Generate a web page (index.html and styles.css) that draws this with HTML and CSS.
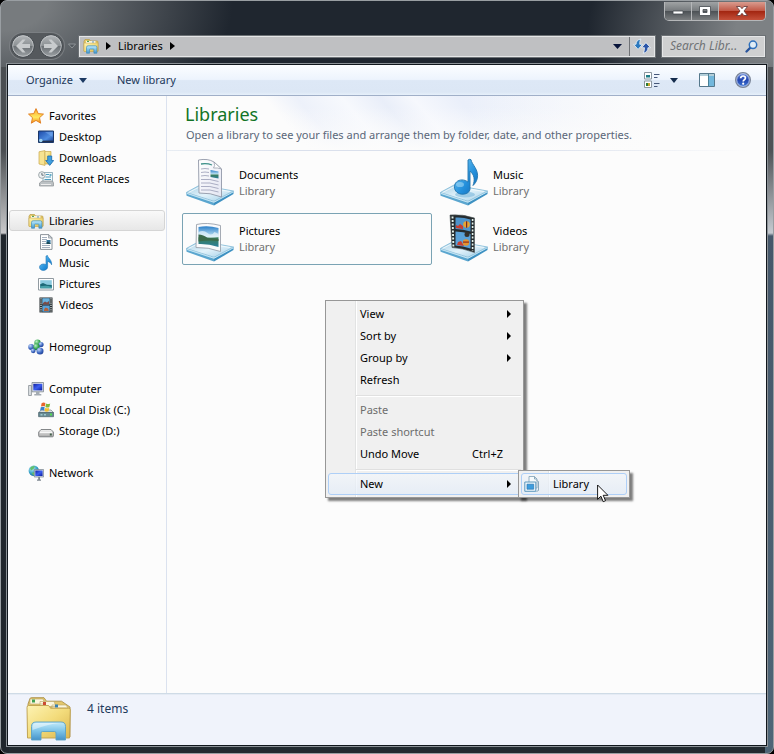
FILE: index.html
```html
<!DOCTYPE html>
<html lang="en">
<head>
<meta charset="utf-8">
<meta name="viewport" content="width=device-width, initial-scale=1">
<title>Libraries</title>
<link rel="stylesheet" href="styles.css">
</head>
<body>
<svg class="defs" width="0" height="0" aria-hidden="true">
  <defs>
    <linearGradient id="gFolder" x1="0" y1="0" x2="1" y2="1"><stop offset="0" stop-color="#fdf3b4"/><stop offset=".5" stop-color="#f3dc7c"/><stop offset="1" stop-color="#dcb64e"/></linearGradient>
    <linearGradient id="gBlue" x1="0" y1="0" x2="0" y2="1"><stop offset="0" stop-color="#c4ebfa"/><stop offset=".5" stop-color="#7cc3e8"/><stop offset="1" stop-color="#4592c9"/></linearGradient>
    <linearGradient id="gTray" x1="0" y1="0" x2="1" y2="1"><stop offset="0" stop-color="#a5cfe5"/><stop offset=".5" stop-color="#e2f2fa"/><stop offset="1" stop-color="#9dcce6"/></linearGradient>
    <linearGradient id="gNote" x1="0" y1="0" x2="1" y2="1"><stop offset="0" stop-color="#7fd0f5"/><stop offset=".6" stop-color="#2490dc"/><stop offset="1" stop-color="#1268b4"/></linearGradient>
    <linearGradient id="gSky" x1="0" y1="0" x2="0" y2="1"><stop offset="0" stop-color="#2b7fc9"/><stop offset=".5" stop-color="#c4e6f4"/><stop offset=".56" stop-color="#3b7d58"/><stop offset="1" stop-color="#2a7f9c"/></linearGradient>
    <linearGradient id="gScreen" x1="0" y1="0" x2="1" y2="1"><stop offset="0" stop-color="#1020a0"/><stop offset=".5" stop-color="#3c5ef0"/><stop offset="1" stop-color="#0a1c9c"/></linearGradient>
    <linearGradient id="gDesk" x1="0" y1="0" x2="1" y2="1"><stop offset="0" stop-color="#1c49a8"/><stop offset=".6" stop-color="#4d8ce0"/><stop offset="1" stop-color="#16378c"/></linearGradient>
    <linearGradient id="gStar" x1="0" y1="0" x2="0" y2="1"><stop offset="0" stop-color="#fba52e"/><stop offset=".6" stop-color="#ffe95e"/><stop offset="1" stop-color="#f3851a"/></linearGradient>
    <linearGradient id="gPaper" x1="0" y1="0" x2="1" y2="1"><stop offset="0" stop-color="#ffffff"/><stop offset="1" stop-color="#e4e6f2"/></linearGradient>
    <linearGradient id="gDrive" x1="0" y1="0" x2="0" y2="1"><stop offset="0" stop-color="#f4f4f4"/><stop offset="1" stop-color="#a8a8a8"/></linearGradient>
    <linearGradient id="gOrb" x1="0" y1="0" x2="0" y2="1"><stop offset="0" stop-color="#b4b8bb"/><stop offset=".48" stop-color="#8d9295"/><stop offset=".52" stop-color="#6c7175"/><stop offset="1" stop-color="#9ea3a6"/></linearGradient>
    <radialGradient id="gGreen" cx=".35" cy=".3" r=".8"><stop offset="0" stop-color="#b8efc0"/><stop offset=".6" stop-color="#31a44c"/><stop offset="1" stop-color="#15702e"/></radialGradient>
    <radialGradient id="gBall" cx=".35" cy=".3" r=".8"><stop offset="0" stop-color="#c0d8fa"/><stop offset=".6" stop-color="#3c66c0"/><stop offset="1" stop-color="#1c3a8c"/></radialGradient>
    <radialGradient id="gGlobe" cx=".35" cy=".3" r=".8"><stop offset="0" stop-color="#b8f0f4"/><stop offset=".6" stop-color="#2f9cc4"/><stop offset="1" stop-color="#175f94"/></radialGradient>
    <linearGradient id="gHelp" x1="0" y1="0" x2="0" y2="1"><stop offset="0" stop-color="#6b8fe0"/><stop offset=".5" stop-color="#2346b0"/><stop offset="1" stop-color="#3d78d8"/></linearGradient>

    <symbol id="i-lib" viewBox="0 0 16 16">
      <path d="M1 3.200 2 1.500h4.500l1 1.500H14a1 1 0 0 1 1 1V13H1z" fill="#e6cb6c" stroke="#b99b43" stroke-width=".7"/>
      <path d="M3 3.200h9.500V5H3z" fill="#fff"/><path d="M4 2.800h2v1.200H4z" fill="#57a35c"/><path d="M9 3.500h2v1H9z" fill="#4e94c8"/>
      <path d="M1 5h14v8.500H1z" fill="url(#gFolder)" stroke="#c9a94e" stroke-width=".6"/>
      <path d="M3.500 15.200V9.400q0-1.600 1.600-1.600h7.200q1.600 0 1.600 1.600v5.800h-3v-3.600q0-.5-.6-.5H7.200q-.7 0-.7.6v3.500z" fill="url(#gBlue)" stroke="#3f8fbe" stroke-width=".7"/>
    </symbol>
    <symbol id="i-star" viewBox="0 0 16 16"><path d="M8 .6l2.200 5 5.300.5-4 3.600 1.200 5.500L8 12.400l-4.700 2.800 1.200-5.500-4-3.600 5.300-.5z" fill="url(#gStar)" stroke="#e07a1c" stroke-width=".9" stroke-linejoin="round"/></symbol>
    <symbol id="i-desktop" viewBox="0 0 16 16"><path d="M.5 2h15v11.500H.5z" fill="url(#gDesk)" stroke="#1b3768"/><path d="M1 11.600h14V13H1z" fill="#20304e"/><circle cx="2.800" cy="11.500" r="1.800" fill="#9fd4f0"/><path d="M7 3h7.500v5z" fill="#7eaef0" opacity=".5"/></symbol>
    <symbol id="i-downloads" viewBox="0 0 16 16"><path d="M1 1.800 7 .6v14.800L1 14z" fill="#f7e391" stroke="#c9a84d" stroke-width=".7"/><path d="M7 1.500h6V14H7z" fill="url(#gFolder)" stroke="#c9a84d" stroke-width=".7"/><path d="M9.700 6h4v4.500h2L11.700 15.400 7.700 10.500h2z" fill="#3f9fe0" stroke="#1c6cb0" stroke-width=".8"/></symbol>
    <symbol id="i-recent" viewBox="0 0 16 16"><path d="M5 1.500h9.500V12H5z" fill="#f4fafc" stroke="#7da0ae" stroke-width=".8"/><path d="M8 3.500h3M7.500 6h5.500M6.500 8.500H13" stroke="#4f9cbe" stroke-width="1"/><path d="M11.500 3h2v2h-2z" fill="#66adc8"/><path d="M1.500 12 4 10h10.500l1 2v3H1.500z" fill="#bcc1c4" stroke="#8b9194" stroke-width=".7"/><path d="M3 13.500h10" stroke="#eee"/><circle cx="3.900" cy="4" r="3.300" fill="#eef2f4" stroke="#8b9599" stroke-width=".8"/><path d="M3.900 2v2.200h1.800" fill="none" stroke="#44525a" stroke-width=".8"/></symbol>
    <symbol id="i-doc" viewBox="0 0 16 16"><path d="M2.500.6h8.300l3.200 3.200v11.600H2.500z" fill="#fff" stroke="#808890" stroke-width=".9"/><path d="M10.500.8v3.300H14z" fill="#d2d7dc" stroke="#808890" stroke-width=".6"/><path d="M4 3.500h5M4 5.500h5M4 7.500h4M4 9.500h4M4 11.500h8M4 13.500h8" stroke="#8d9bac" stroke-width=".8"/><path d="M8.500 6h4v4h-4z" fill="#2e729c"/><path d="M8.500 8.800 10 7.600l2.500 2V10h-4z" fill="#194a57"/></symbol>
    <symbol id="i-note" viewBox="0 0 16 16"><path d="M8 1 9.500.5C9.700 3 14 4.500 13.600 9.800c-.9-2.200-2.300-3-4-3.400v5.500c0 2-2 3.500-4.300 3.500-2.200 0-3.800-1.300-3.800-3.200S3.300 9 5.500 9c.9 0 1.800.2 2.500.7z" fill="url(#gNote)" stroke="#1c75b5" stroke-width=".6"/></symbol>
    <symbol id="i-pic" viewBox="0 0 16 16"><path d="M.5 2.500h15v11.500H.5z" fill="#fff" stroke="#848e96" stroke-width=".9"/><path d="M2.200 4.200h11.600v8H2.200z" fill="#8ccbe0"/><path d="M2.200 8.200 5 7l4 1.800 4.800.3v3.100H2.200z" fill="#1c6977"/><path d="M2.200 10.300q6-1.600 11.600.6v1.300H2.200z" fill="#46a0a8"/></symbol>
    <symbol id="i-video" viewBox="0 0 16 16"><path d="M1.500.5h13v15h-13z" fill="#23292c"/><path d="M4.300 1.200h7.400v6.200H4.300z" fill="#69b1de"/><path d="M4.300 8.500h7.400v6.200H4.300z" fill="#5aa3d8"/><path d="M5 6 7 4.600l2 1L11 4v3.400H5z" fill="#7c4c48"/><path d="M6 12.500l1.500-2 2.500 1 .8 2.500H6z" fill="#b4623c"/><path d="M3 1.200v14M13 1.200v14" stroke="#e6f0ee" stroke-width="1.200" stroke-dasharray="1.200 1"/></symbol>
    <symbol id="i-home" viewBox="0 0 16 16"><circle cx="9.500" cy="3.800" r="3.200" fill="url(#gGreen)"/><circle cx="3.200" cy="8" r="3" fill="url(#gBall)"/><circle cx="13" cy="5.500" r="2.600" fill="url(#gBall)"/><circle cx="8.500" cy="8" r="3.200" fill="url(#gGreen)"/><circle cx="12" cy="12" r="3.500" fill="url(#gBall)"/><circle cx="5.200" cy="11.800" r="2.400" fill="url(#gBall)"/></symbol>
    <symbol id="i-computer" viewBox="0 0 16 16"><path d="M.6 4.500h2.800v10H.6z" fill="#dfe3e6" stroke="#868d93" stroke-width=".8"/><path d="M4 1.500h11.500v9.300H4z" fill="#e1e5ea" stroke="#7b8590" stroke-width=".8"/><path d="M5.300 2.800h9v6.600h-9z" fill="url(#gScreen)"/><path d="M8 11h3.500v2H8zM6.300 13h7v1.500h-7z" fill="#a4abb2"/></symbol>
    <symbol id="i-disk" viewBox="0 0 16 16"><path d="M1 10.500 3 8h10l2.500 2.500z" fill="#d7dfe2" stroke="#75838a" stroke-width=".7"/><path d="M.6 10.500h14.900v4.200H.6z" fill="#678a92" stroke="#49616a" stroke-width=".7"/><path d="M2.500 12h2v1.500h-2zM6 12h2v1.500H6z" fill="#9ec8cf"/><path d="M12 11.600h2v1.800h-2z" fill="#53dc4e"/><path d="M3.600 1.300Q5.500 0 7.400 1.100L6.800 4.400Q5 3.500 3 4.500z" fill="#e8642c"/><path d="M8 1.500q2 1 4.200 0l-.8 3.500q-2 1-4 0z" fill="#7fb93a"/><path d="M2.800 5.300q2-1 3.900 0l-.7 3.300q-2-1-3.900 0z" fill="#3a80c9"/><path d="M7.300 5.700q2 1 4 0l-.8 3.500q-2 .9-3.900-.1z" fill="#f5c02f"/></symbol>
    <symbol id="i-storage" viewBox="0 0 16 16"><path d="M.7 9 3 6.500h10L15.400 9v3.800q0 1-1 1H1.700q-1 0-1-1z" fill="url(#gDrive)" stroke="#76797c" stroke-width=".9"/><path d="M2 9.300h12" stroke="#fff"/><path d="M11.800 10.500h2v2h-2z" fill="#43604a"/></symbol>
    <symbol id="i-network" viewBox="0 0 16 16"><circle cx="5.800" cy="5.800" r="5.200" fill="url(#gGlobe)"/><path d="M2 3q2-2.500 5-2L5.500 4 3 5.500zM3.500 8l3-1 1 3-2 .5z" fill="#63c06b"/><path d="M6.300 4.500h9.300V12H6.300z" fill="#d6dde4" stroke="#76828c" stroke-width=".7"/><path d="M7.300 5.500h7.300V11H7.300z" fill="url(#gScreen)"/><path d="M10.200 12h1.800v2.500h1v1.200H9v-1.200h1.200z" fill="#7d8790"/></symbol>

    <g id="tray">
      <path d="M.3 36 28 45v3.500L.6 38.800z" fill="#5ba6cf"/><path d="M28 45 47.500 34v3.100L28 48.500z" fill="#3e91c2"/>
      <path d="M.3 35.500 14 28 47.500 34 28 44.300z" fill="url(#gTray)" stroke="#7db8d6" stroke-width=".8"/>
      <path d="M2.500 35.500 14.500 29.500 44 34.500" fill="none" stroke="#fff" opacity=".8" stroke-width=".8"/>
      <path d="M1 36.500 28 45.300 47 35" fill="none" stroke="#c5e6f5" stroke-width="1"/>
    </g>
    <symbol id="b-doc" viewBox="0 1 48 48"><use href="#tray"/>
      <path d="M12.500 3Q22 1.200 28 5l7.500 7V40Q24 35.500 13 36z" fill="url(#gPaper)" stroke="#9298a8" stroke-width=".9"/>
      <path d="M28 5q1.500 4-.5 6 4-.5 8 1z" fill="#fff" stroke="#8d94a2" stroke-width=".7"/>
      <path d="M15 7q6-1 11 1" fill="none" stroke="#3d9089" stroke-width="1.300"/>
      <path d="M15 12q4-1 8 0M15 15.500q4-1 8 0M15 19q4-1 8 0M15 22.500q9-1 17.500 2M15 26q9-1 17.500 2M15 29.500q9-1 17.500 2M15 33q9-1 17.500 2" fill="none" stroke="#a3a6bd" stroke-width=".9"/>
      <path d="M24.500 13l8 1.500v7l-8-1.500z" fill="url(#gSky)"/>
    </symbol>
    <symbol id="b-note" viewBox="0 1 48 48"><use href="#tray"/>
      <ellipse cx="25" cy="37.500" rx="10" ry="3" fill="#79b8dc" opacity=".6"/>
      <path d="M28 3q1.500-1.200 3-.3c.8 5 8.200 10 6.300 18.600-.6 2.800-2.200 5.400-4.300 7.200 2.200-5.800 1.300-11-3-14.300v15.500c.8 4.600-2.500 7.300-6.800 7.500-5 .2-8.800-3-8.800-7.300 0-4 3.300-7 7.500-7 2.300 0 4.500.8 6.100 2.200z" fill="url(#gNote)" stroke="#2175ae" stroke-width=".9"/>
      <ellipse cx="20" cy="27.500" rx="4" ry="2.600" fill="#c7edfc" opacity=".45"/>
    </symbol>
    <symbol id="b-pic" viewBox="0 1 48 48"><use href="#tray"/>
      <path d="M10.500 11.500Q21 9 34.500 12.500V38.500Q22 34 10 34.500z" fill="#fafafc" stroke="#9ba2ab" stroke-width=".9"/>
      <path d="M12.500 14Q22 12 32.500 15v19Q22 30.500 12.500 31z" fill="url(#gSky)"/>
      <path d="M12.500 19q5-2.500 9 1t7-1l4 2v3q-10 2-20-1z" fill="#e9f5fb" opacity=".7"/>
      <path d="M12.500 21.500q5 0 9 3.500l11 1v2q-10-1-20 .5z" fill="#3c6a4a"/>
    </symbol>
    <symbol id="b-video" viewBox="0 1 48 48"><use href="#tray"/>
      <path d="M10 2Q23 1 34.500 5V39.500Q22 35 12 34.500Z" fill="#252b2e" stroke="#4c5558" stroke-width=".6"/>
      <path d="M15.500 4.500Q23 4 30.500 6.500v12Q23 16 15.500 16z" fill="#4f94cb"/>
      <path d="M15.500 18.500q7.500 0 15 2.500v14.500q-7.500-2.500-15-3z" fill="#5aa2da"/>
      <path d="M16 15v-3l2 1 2-2 3 2v3zM17 32l1-3 3-1 3 5z" fill="#c93f31"/>
      <circle cx="26.500" cy="11.500" r="3.300" fill="#e8a430"/><path d="M26 8.300h1.200v6.500H26z" fill="#7b2921"/>
      <circle cx="27" cy="21.500" r="2.500" fill="#34302c"/><circle cx="26" cy="29.500" r="3.200" fill="#e5922d"/><path d="M23 28.500h6v1.200h-6z" fill="#8e2d20"/>
      <path d="M12.500 3.500 13.400 34" stroke="#e5f4ee" stroke-width="1.900" stroke-dasharray="2 1.500"/><path d="M32.600 6v32" stroke="#e5f4ee" stroke-width="1.600" stroke-dasharray="2 1.500"/>
    </symbol>
  </defs>
</svg>

<div class="window">
  <header class="titlebar">
    <div class="captions">
      <button class="cap" aria-label="Minimize"><svg width="14" height="12" viewBox="0 0 14 12"><path d="M2 6h10v3H2z" fill="#fff" stroke="#44494e" stroke-width=".8"/></svg></button>
      <button class="cap" aria-label="Maximize"><svg width="14" height="12" viewBox="0 0 14 12"><path d="M1.500 1.500h11v9h-11zM5 4.500v3h4v-3z" fill="#fff" stroke="#44494e" stroke-width=".8" fill-rule="evenodd"/></svg></button>
      <button class="cap cap-close" aria-label="Close"><svg width="14" height="12" viewBox="0 0 14 12"><path d="M1.500 1.500H5.200L7 3.700l1.800-2.200H12.500L9 6l3.500 4.500H8.800L7 8.300l-1.800 2.200H1.500L5 6z" fill="#fff" stroke="#5d3433" stroke-width=".8"/></svg></button>
    </div>
    <div class="navbar">
      <div class="history">
        <button class="orb" aria-label="Back"><svg width="24" height="24" viewBox="0 0 24 24"><circle cx="12" cy="12" r="11.300" fill="url(#gOrb)" stroke="#40464b"/><circle cx="12" cy="12" r="10.300" fill="none" stroke="#c4c7c9" stroke-width=".8"/><path d="M5 12l6.500-6.500h3L11 10h8v4h-8l3.500 4.500h-3z" fill="#c8cbcd"/></svg></button>
        <button class="orb" aria-label="Forward"><svg width="24" height="24" viewBox="0 0 24 24"><circle cx="12" cy="12" r="11.300" fill="url(#gOrb)" stroke="#40464b"/><circle cx="12" cy="12" r="10.300" fill="none" stroke="#c4c7c9" stroke-width=".8"/><path d="M19 12l-6.500-6.500h-3L13 10H5v4h8l-3.500 4.500h3z" fill="#c8cbcd"/></svg></button>
      </div>
      <button class="recent" aria-label="Recent pages"><svg width="8" height="6" viewBox="0 0 8 6"><path d="M.5 1h7L4 5z" fill="#50565b" stroke="#9a9fa3" stroke-width=".8"/></svg></button>
      <div class="address">
        <svg width="16" height="16"><use href="#i-lib"/></svg>
        <button class="crumb-arrow" aria-label="Root folders"><svg width="5" height="8" viewBox="0 0 5 8"><path d="M0 0l5 4-5 4z"/></svg></button>
        <button class="crumb">Libraries</button>
        <button class="crumb-arrow" aria-label="Subfolders"><svg width="5" height="8" viewBox="0 0 5 8"><path d="M0 0l5 4-5 4z"/></svg></button>
        <button class="drop" aria-label="Previous locations"><svg width="9" height="5" viewBox="0 0 9 5"><path d="M0 0h9L4.500 5z" fill="#07133a"/></svg></button>
        <button class="refresh" aria-label="Refresh"><svg width="18" height="16" viewBox="0 0 16 14"><path d="M4.500 10 .5 5.500h2.200Q2.800 1.500 7 .8 5.800 2.500 6 5.500h2.500z" fill="#2c79be" stroke="#eef6fb" stroke-width=".7"/><path d="M11.500 4 15.600 8.500h-2.300q0 4-4.300 5 1.300-2 1.200-5H7.600z" fill="#2a55a8" stroke="#eef6fb" stroke-width=".7"/></svg></button>
      </div>
      <label class="search">
        <input type="text" placeholder="Search Libr..." aria-label="Search Libraries">
        <svg width="13" height="13" viewBox="0 0 13 13"><path d="M1.500 11.500 5.500 7.500" stroke="#28549c" stroke-width="2.300" stroke-linecap="round"/><circle cx="8" cy="4.800" r="3.700" fill="#e0edf6" stroke="#2e70bc" stroke-width="1.500"/></svg>
      </label>
    </div>
  </header>

  <div class="client">
    <div class="toolbar">
      <button class="tool">Organize <svg width="8" height="5" viewBox="0 0 8 5"><path d="M0 0h8L4 5z" fill="#1c3a63"/></svg></button>
      <button class="tool">New library</button>
      <div class="tool-right">
        <button class="tool" aria-label="Change view"><svg width="16" height="16" viewBox="0 0 16 16"><path d="M.5.5h7v6.500h-7zM.5 9h7v6.500h-7z" fill="#fff" stroke="#8b969f"/><path d="M2 3h4v2.500H2z" fill="#1e7d86"/><path d="M2 11h2v3H2z" fill="#2e7a36"/><path d="M4 11h2v3H4z" fill="#c6a52b"/><path d="M10 2.500h5.500M10 5.500h3.500M10 11.500h5.500M10 14.500h3.500" stroke="#46587a" stroke-width="1"/></svg></button>
        <button class="tool" aria-label="More view options"><svg width="8" height="5" viewBox="0 0 8 5"><path d="M0 0h8L4 5z" fill="#142c4c"/></svg></button>
        <button class="tool tool-pane" aria-label="Show the preview pane"><svg width="16" height="14" viewBox="0 0 16 14"><path d="M.5.5h15v13H.5z" fill="#fff" stroke="#55788c"/><path d="M1 1h14v2H1z" fill="#b2ced9"/><path d="M10 3h5v10h-5z" fill="#72b7dc"/><path d="M9.500 1v12" stroke="#4a8095"/></svg></button>
        <button class="tool tool-help" aria-label="Get help"><svg width="16" height="16" viewBox="0 0 16 16"><circle cx="8" cy="8" r="7.400" fill="url(#gHelp)" stroke="#7d8797" stroke-width="1.200"/><circle cx="8" cy="8" r="6.300" fill="none" stroke="#d5def2" stroke-width=".8"/><path d="M5.700 6.300Q5.800 4 8.100 4q2.300 0 2.300 2 0 1.200-1.300 1.900-.9.500-.9 1.600" fill="none" stroke="#fff" stroke-width="1.700"/><circle cx="8.200" cy="11.700" r="1.100" fill="#fff"/></svg></button>
      </div>
    </div>

    <div class="body">
      <nav class="tree" aria-label="Navigation pane">
        <ul>
          <li><a href="#"><svg><use href="#i-star"/></svg>Favorites</a></li>
          <li class="sub"><a href="#"><svg><use href="#i-desktop"/></svg>Desktop</a></li>
          <li class="sub"><a href="#"><svg><use href="#i-downloads"/></svg>Downloads</a></li>
          <li class="sub"><a href="#"><svg><use href="#i-recent"/></svg>Recent Places</a></li>
        </ul>
        <ul>
          <li><a class="selected" href="#"><svg><use href="#i-lib"/></svg>Libraries</a></li>
          <li class="sub"><a href="#"><svg><use href="#i-doc"/></svg>Documents</a></li>
          <li class="sub"><a href="#"><svg><use href="#i-note"/></svg>Music</a></li>
          <li class="sub"><a href="#"><svg><use href="#i-pic"/></svg>Pictures</a></li>
          <li class="sub"><a href="#"><svg><use href="#i-video"/></svg>Videos</a></li>
        </ul>
        <ul>
          <li><a href="#"><svg><use href="#i-home"/></svg>Homegroup</a></li>
        </ul>
        <ul>
          <li><a href="#"><svg><use href="#i-computer"/></svg>Computer</a></li>
          <li class="sub"><a href="#"><svg><use href="#i-disk"/></svg>Local Disk (C:)</a></li>
          <li class="sub"><a href="#"><svg><use href="#i-storage"/></svg>Storage (D:)</a></li>
        </ul>
        <ul>
          <li><a href="#"><svg><use href="#i-network"/></svg>Network</a></li>
        </ul>
      </nav>

      <main class="content">
        <div class="intro">
          <h1>Libraries</h1>
          <p>Open a library to see your files and arrange them by folder, date, and other properties.</p>
        </div>
        <div class="items">
          <a class="item" href="#"><svg><use href="#b-doc"/></svg><span><b>Documents</b><i>Library</i></span></a>
          <a class="item" href="#"><svg><use href="#b-note"/></svg><span><b>Music</b><i>Library</i></span></a>
          <a class="item focused" href="#"><svg><use href="#b-pic"/></svg><span><b>Pictures</b><i>Library</i></span></a>
          <a class="item" href="#"><svg><use href="#b-video"/></svg><span><b>Videos</b><i>Library</i></span></a>
        </div>
      </main>
    </div>

    <footer class="details">
      <svg width="46" height="46" viewBox="0 0 46 46">
        <path d="M2 8 4 2.500q.3-.8 1.200-.8H18l2.500 3.500h15L44 11v30H2z" fill="#e3c76c" stroke="#ad9149" stroke-width=".9"/>
        <path d="M4 3h13l2 5H4zM14 5.500h14l2 5H14zM26 9h14l2 3H26z" fill="#fbf6dd" stroke="#b9a465" stroke-width=".6"/>
        <path d="M6 3.500h3v3H6z" fill="#3fa250"/><path d="M17 6h3v3h-3z" fill="#cc4a32"/><path d="M29 8.500h3v3h-3z" fill="#3580b5"/>
        <path d="M1 11.500q0-2 1.500-2H22q1 0 1.700 1.200l.8 1.500h18.300q1.500 0 1.500 1.500L43.500 42H1.500z" fill="url(#gFolder)" stroke="#bd9f4d" stroke-width=".9"/>
        <path d="M5.500 44V30.500q0-4.500 4.500-4.500h25q4.500 0 4.500 4.500V44H30v-7q0-1.500-1.500-1.500h-12q-1.500 0-1.500 1.500v7z" fill="url(#gBlue)" stroke="#5ba2c5" stroke-width=".9"/>
        <path d="M6.500 34v-3q0-4 4-4H34q-12 1-27.500 7z" fill="#fff" opacity=".45"/>
      </svg>
      <span>4 items</span>
    </footer>
  </div>

  <div class="menu" role="menu">
    <button role="menuitem">View<svg class="more" viewBox="0 0 4 8"><path d="M0 0l4 4-4 4z"/></svg></button>
    <button role="menuitem">Sort by<svg class="more" viewBox="0 0 4 8"><path d="M0 0l4 4-4 4z"/></svg></button>
    <button role="menuitem">Group by<svg class="more" viewBox="0 0 4 8"><path d="M0 0l4 4-4 4z"/></svg></button>
    <button role="menuitem">Refresh</button>
    <hr>
    <button role="menuitem" disabled>Paste</button>
    <button role="menuitem" disabled>Paste shortcut</button>
    <button role="menuitem">Undo Move<kbd>Ctrl+Z</kbd></button>
    <hr>
    <button role="menuitem" class="hot">New<svg class="more" viewBox="0 0 4 8"><path d="M0 0l4 4-4 4z"/></svg></button>
    <div class="menu submenu" role="menu">
      <button role="menuitem" class="hot"><svg class="glyph" width="16" height="16" viewBox="0 0 16 16"><path d="M5 .5h5.500L13 3v9H5z" fill="#f6fafc" stroke="#7fa0b5" stroke-width=".8"/><path d="M10.500.5V3H13M12.500 4.500l2 1v9l-2 1" fill="none" stroke="#7fa0b5" stroke-width=".9"/><path d="M.8 6h11v9.300H.8z" fill="#eef6fb" stroke="#5d98bc" stroke-width="1"/><path d="M3 8.200h6.700v5H3z" fill="#3e9ddd" stroke="#2b79b4" stroke-width=".7"/></svg>Library</button>
    </div>
    <svg class="pointer" width="12" height="19" viewBox="0 0 12 19"><path d="M.6 1v14.300l3.300-3.100 2.300 5.500 2.300-1-2.300-5.400h4.700z" fill="#fff" stroke="#000" stroke-width=".9"/></svg>
  </div>
</div>
</body>
</html>
```
FILE: styles.css
```css
* { box-sizing: border-box; }

body {
  margin: 0;
  background: #000;
  font: 11px/16px "Noto Sans", "Open Sans", sans-serif;
  color: #000;
}

button {
  margin: 0;
  padding: 0;
  border: 0;
  background: none;
  font: inherit;
  color: inherit;
}

a { color: inherit; text-decoration: none; }
svg { display: block; flex: none; }
.defs { position: absolute; }

/* Glass frame */
.window {
  position: relative;
  display: flex;
  flex-direction: column;
  min-height: 100vh;
  padding: 1px 6px 7px;
  border: 1px solid #999ea2;
  border-radius: 7px;
  background:
    linear-gradient(transparent 66px, #4a4e52 66px 150px, #c9c9cb 232px, #20262c 234px) left / 8px 100% no-repeat,
    linear-gradient(transparent 66px, #4e5256 66px 150px, #c5cad0 232px, #45576a 235px, #4e6577 100%) right / 8px 100% no-repeat,
    radial-gradient(ellipse 30% 150px at 0 0, #777b7e 20%, transparent) top / 100% 66px no-repeat,
    radial-gradient(ellipse 24% 130px at 100% 30px, #7d8184 20%, transparent) top / 100% 66px no-repeat,
    linear-gradient(#1f262f, #1f262f) top / 100% 66px no-repeat,
    #222a30;
}

.titlebar { display: flex; flex-direction: column; }

.captions {
  display: flex;
  align-self: flex-end;
  height: 19px;
  margin-right: 1px;
  border: 1px solid #b5b7b9;
  border-top: 0;
  border-radius: 0 0 5px 5px;
  overflow: hidden;
}
.cap {
  display: grid;
  place-items: center;
  width: 27px;
  border-right: 1px solid #b5b7b9;
  background: linear-gradient(#a0a3a5, #777b7e 48%, #4d5256 52%, #7b7e80);
}
.cap-close {
  width: 46px;
  border-right: 0;
  background: linear-gradient(#d99c8f, #c25947 48%, #a32611 52%, #c4503a);
}

.navbar {
  display: flex;
  align-items: center;
  height: 43px;
  padding: 7px 2px 0 3px;
}
.history {
  display: flex;
  gap: 4px;
  padding: 1px;
  border-radius: 14px;
  background: #55595d;
  box-shadow: 0 0 0 1px #7b7f83;
}
.orb { width: 24px; height: 24px; }
.recent { width: 15px; display: grid; place-items: center; }

.address, .search {
  display: flex;
  align-items: center;
  height: 21px;
  border: 1px solid #e5e6e7;
  outline: 1px solid #6c7175;
  background: #bfc0c2;
}
.address { flex: 1; padding-left: 3px; gap: 7px; }
.address .drop { margin-left: auto; }
.refresh {
  display: grid;
  place-items: center;
  align-self: stretch;
  width: 25px;
  border-left: 1px solid #6f7276;
  background: #c9cacc;
}
.search {
  width: 103px;
  margin-left: 7px;
  padding: 0 6px;
  background: #cfd0d1;
}
.search input {
  flex: 1;
  min-width: 0;
  padding: 0 0 0 1px;
  border: 0;
  background: none;
  font: inherit;
  font-size: 12px;
  outline: 0;
}
.search input::placeholder { color: #707376; font-style: italic; opacity: 1; }

/* Client area */
.client {
  flex: 1;
  display: flex;
  flex-direction: column;
  border: 1px solid #10161c;
  outline: 1px solid #8b9196;
  background: #fcfcfc;
}
.toolbar {
  display: flex;
  align-items: center;
  height: 31px;
  padding: 0 15px 0 18px;
  border-bottom: 1px solid #a0afc8;
  background: linear-gradient(#fbfdff, #edf4fd 48%, #dde8f6 52%, #dce7f5 90%, #e6f0fa);
  color: #1e395b;
}
.tool { display: flex; align-items: center; gap: 6px; margin-right: 30px; }
.tool-right { display: flex; align-items: center; margin-left: auto; }
.tool-right .tool { margin: 0 0 0 10px; }
.tool-right .tool-pane { margin-left: 21px; }
.tool-right .tool-help { margin-left: 20px; }

.body { flex: 1; display: flex; }

.tree {
  display: flex;
  flex-direction: column;
  gap: 21px;
  width: 159px;
  padding: 9px 1px;
  border-right: 1px solid #dbe2ef;
}
.tree ul { margin: 0; padding: 0; list-style: none; }
.tree a {
  display: flex;
  align-items: center;
  gap: 5px;
  height: 21px;
  padding-left: 18px;
  border: 1px solid transparent;
  border-radius: 3px;
  white-space: nowrap;
}
.tree .sub a { padding-left: 28px; }
.tree svg { width: 16px; height: 16px; }
.tree .selected {
  border-color: #d5d5d5;
  background: linear-gradient(#f9f9f9, #e7e7e7);
}

.content { flex: 1; min-width: 0; }
.intro {
  height: 55px;
  padding: 6px 18px 0;
  background:
    linear-gradient(90deg, #e8edf3, #dae0ec 20% 60%, transparent 97%) bottom / 100% 1px no-repeat,
    linear-gradient(90deg, transparent 50%, #fcfcfc 82%),
    linear-gradient(transparent 20%, #fcfcfc),
    linear-gradient(50deg, #fcfcfc 22%, #edf1fa 27%, #f7f9fd 34%, #e9eef9 40%, #f6f8fd 45%, #eaeffa 52%, #f8fafd 100%);
}
.intro h1 {
  margin: 0;
  font-size: 18px;
  line-height: 24px;
  font-weight: 400;
  color: #127426;
}
.intro p { margin: 0; padding: 1px; color: #5a6779; white-space: nowrap; }

.items {
  display: grid;
  grid-template-columns: repeat(auto-fill, 250px);
  gap: 4px;
  padding: 6px 15px;
}
.item {
  display: flex;
  gap: 5px;
  height: 52px;
  padding-left: 3px;
  border: 1px solid transparent;
  border-radius: 2px;
}
.item svg { width: 48px; height: 48px; }
.item span { align-self: center; }
.item b, .item i { display: block; font-weight: 400; font-style: normal; }
.item i { color: #707070; }
.focused { border-color: #7aa3b4; }

.details {
  display: flex;
  gap: 15px;
  height: 52px;
  padding: 2px 18px;
  border-top: 1px solid #cfdbe6;
  background: #f0f3fb;
  box-shadow: inset 0 1px #e5ebf4;
  font-size: 12px;
  color: #1e395b;
}
.details span { padding-top: 5px; }

/* Context menu floats above the file list */
.menu {
  position: absolute;
  left: 324px;
  top: 299px;
  width: 199px;
  padding: 2px;
  border: 1px solid #979797;
  background: linear-gradient(90deg, transparent 29px, #e2e3e3 29px 30px, #fff 30px 31px, transparent 31px) #f0f0f0;
  box-shadow: 3px 3px 2px rgba(0, 0, 0, .5);
}
.menu button {
  display: flex;
  align-items: center;
  width: 100%;
  height: 22px;
  padding: 0 9px 0 31px;
  border: 1px solid transparent;
  border-radius: 3px;
}
.menu button:disabled { color: #6d6d6d; }
.menu .more { width: 4px; height: 8px; margin-left: auto; }
.menu kbd { margin-left: auto; padding-right: 8px; font: inherit; }
.menu hr {
  height: 2px;
  margin: 4px 0 2px 28px;
  border: 0;
  border-top: 1px solid #e0e0e0;
  border-bottom: 1px solid #fff;
}
.menu .hot {
  border-color: #aecff7;
  background: linear-gradient(rgba(242, 246, 251, .7), rgba(226, 236, 248, .7));
}
.submenu {
  left: 192px;
  top: auto;
  bottom: -1px;
  width: 112px;
}
.submenu button { padding: 0 0 0 2px; gap: 13px; }
.pointer { position: absolute; left: 271px; top: 183px; }
```
